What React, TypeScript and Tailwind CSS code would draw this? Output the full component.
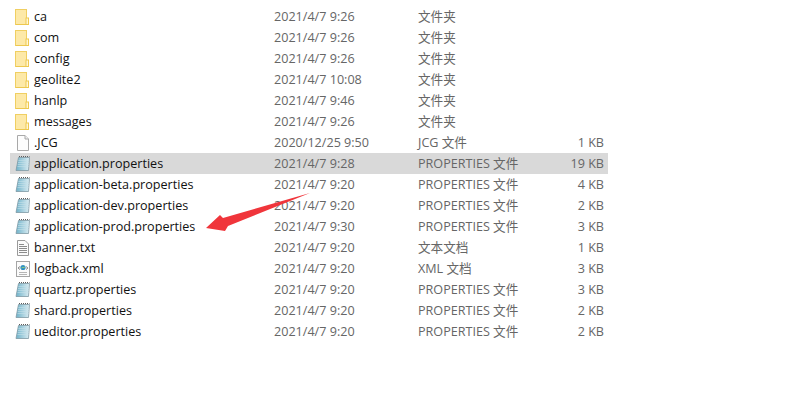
const rows = [
  { name: "ca", date: "2021/4/7 9:26", type: "文件夹", size: "", icon: "folder" },
  { name: "com", date: "2021/4/7 9:26", type: "文件夹", size: "", icon: "folder" },
  { name: "config", date: "2021/4/7 9:26", type: "文件夹", size: "", icon: "folder" },
  { name: "geolite2", date: "2021/4/7 10:08", type: "文件夹", size: "", icon: "folder" },
  { name: "hanlp", date: "2021/4/7 9:46", type: "文件夹", size: "", icon: "folder" },
  { name: "messages", date: "2021/4/7 9:26", type: "文件夹", size: "", icon: "folder" },
  { name: ".JCG", date: "2020/12/25 9:50", type: "JCG 文件", size: "1 KB", icon: "blank" },
  { name: "application.properties", date: "2021/4/7 9:28", type: "PROPERTIES 文件", size: "19 KB", icon: "notepad" },
  { name: "application-beta.properties", date: "2021/4/7 9:20", type: "PROPERTIES 文件", size: "4 KB", icon: "notepad" },
  { name: "application-dev.properties", date: "2021/4/7 9:20", type: "PROPERTIES 文件", size: "2 KB", icon: "notepad" },
  { name: "application-prod.properties", date: "2021/4/7 9:30", type: "PROPERTIES 文件", size: "3 KB", icon: "notepad" },
  { name: "banner.txt", date: "2021/4/7 9:20", type: "文本文档", size: "1 KB", icon: "text" },
  { name: "logback.xml", date: "2021/4/7 9:20", type: "XML 文档", size: "3 KB", icon: "xml" },
  { name: "quartz.properties", date: "2021/4/7 9:20", type: "PROPERTIES 文件", size: "3 KB", icon: "notepad" },
  { name: "shard.properties", date: "2021/4/7 9:20", type: "PROPERTIES 文件", size: "2 KB", icon: "notepad" },
  { name: "ueditor.properties", date: "2021/4/7 9:20", type: "PROPERTIES 文件", size: "2 KB", icon: "notepad" },
];

function FileIcon({ kind }: { kind: string }) {
  if (kind === "folder") {
    return (
      <svg width="16" height="16" viewBox="0 0 16 16">
        <rect x="0.5" y="0.5" width="11" height="15" fill="#fde9a8" stroke="#f0cf62" />
        <rect x="11" y="9" width="2.5" height="6.5" fill="#fff6d6" stroke="#efc94f" />
        <path d="M1 15.5H13" stroke="#edc84f" />
      </svg>
    );
  }
  if (kind === "blank") {
    return (
      <svg width="16" height="16" viewBox="0 0 16 16">
        <path d="M2.5 0.5H10L13.5 4V15.5H2.5Z" fill="#fdfdfd" stroke="#a9a9a9" />
        <path d="M10 0.5V4H13.5" fill="#eeeeee" stroke="#a9a9a9" />
      </svg>
    );
  }
  if (kind === "text") {
    return (
      <svg width="16" height="16" viewBox="0 0 16 16">
        <path d="M2.5 0.5H10L13.5 4V15.5H2.5Z" fill="#fbfbfb" stroke="#9a9a9a" />
        <path d="M4 4.5H9M4 6.5H12M4 8.5H12M4 10.5H12M4 12.5H12" stroke="#8c8c8c" />
      </svg>
    );
  }
  if (kind === "xml") {
    return (
      <svg width="16" height="16" viewBox="0 0 16 16">
        <rect x="1.5" y="0.5" width="13" height="15" fill="#fbfbfb" stroke="#a5a5a5" />
        <path d="M3 7L5 5.5M3 7L5 8.5M13 7L11 5.5M13 7L11 8.5" stroke="#8a8a8a" />
        <circle cx="8" cy="6.5" r="2.6" fill="#2f8fc4" />
        <path d="M6.5 7C7.5 5.5 8.5 7.5 9.8 6" stroke="#9fd36d" fill="none" />
        <path d="M4 11.5H12M4 13.5H12" stroke="#b5b5b5" />
      </svg>
    );
  }
  return (
    <svg width="17" height="17" viewBox="0 0 17 17">
      <defs>
        <linearGradient id="pad" x1="0" y1="0" x2="1" y2="0">
          <stop offset="0" stopColor="#6fb2c9" />
          <stop offset="1" stopColor="#dcedf3" />
        </linearGradient>
      </defs>
      <path d="M3.5 2.5H14.5L13.5 15.5H1Z" fill="url(#pad)" stroke="#7d98a3" strokeWidth="0.8" />
      <path d="M4 1.5H14.5" stroke="#5e5e5e" strokeDasharray="1 1" />
      <path d="M3.4 5.5H14M3 7.5H14M2.8 9.5H13.8M2.5 11.5H13.6" stroke="#c6e0ea" strokeWidth="0.6" />
    </svg>
  );
}

export default function App() {
  return (
    <div
      className="relative h-[410px] w-[787px] overflow-hidden bg-white pt-[6px] pl-[10px] text-[12.6px]"
      style={{ fontFamily: '"Open Sans", "Noto Sans CJK SC", sans-serif' }}
    >
      {rows.map((row) => (
        <div
          key={row.name}
          className={`flex h-[21px] w-[598px] items-center ${row.name === "application.properties" ? "bg-[#d9d9d9]" : ""}`}
        >
          <div className="flex w-[24px] shrink-0 justify-start pl-[5px]">
            <FileIcon kind={row.icon} />
          </div>
          <div className="w-[240px] shrink-0 whitespace-nowrap pt-[2px] text-[#111111]">{row.name}</div>
          <div className="w-[144px] shrink-0 whitespace-nowrap pt-[2px] text-[#666666]">{row.date}</div>
          <div className="w-[120px] shrink-0 whitespace-nowrap pt-[2px] text-[#666666]">{row.type}</div>
          <div className="w-[66px] shrink-0 whitespace-nowrap pt-[2px] text-right text-[#666666]">{row.size}</div>
        </div>
      ))}
      <svg className="absolute left-[200px] top-[188px]" width="120" height="48" viewBox="200 188 120 48">
        <path d="M310 193L228 226L225 231L206 228L220 215L223 218Z" fill="#f0353b" />
      </svg>
    </div>
  );
}
